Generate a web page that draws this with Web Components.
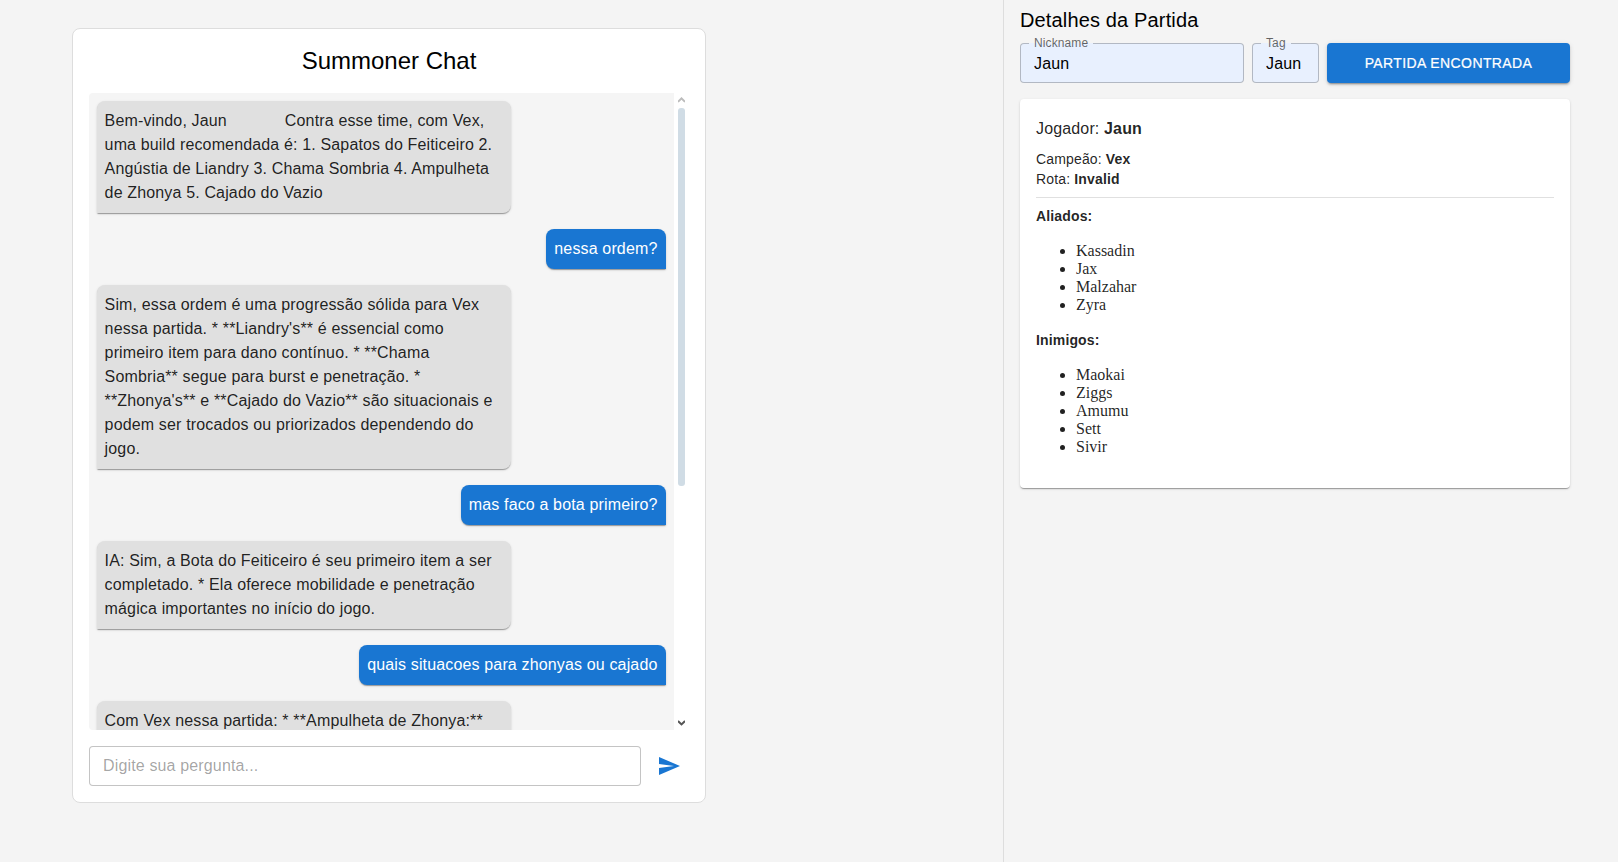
<!DOCTYPE html>
<html lang="pt-BR">
<head>
<meta charset="utf-8">
<title>Summoner Chat</title>
<style>
body { margin: 0; background: #f4f4f4; font-family: "Liberation Sans", Arial, sans-serif; color: rgba(0,0,0,.87); }
</style>
</head>
<body>
<summoner-app></summoner-app>
<script>
const define = (name, html, setup) => {
  const template = document.createElement('template');
  template.innerHTML = html;
  customElements.define(name, class extends HTMLElement {
    constructor() {
      super();
      this.attachShadow({ mode: 'open' }).append(template.content.cloneNode(true));
    }
    connectedCallback() { if (setup) setup(this, this.shadowRoot); }
  });
};

define('chat-message', `
<style>
:host { display: flex; justify-content: flex-start; margin-bottom: 16px; font-size: 16px; line-height: 24px; letter-spacing: .15008px; }
:host([mine]) { justify-content: flex-end; }
.bubble { box-sizing: content-box; max-width: 70%; padding: 8px 8.4px 8px 7.6px; border-radius: 8px 8px 8px 0; background: #e0e0e0; color: rgba(0,0,0,.87);
  box-shadow: 0 2px 1px -1px rgba(0,0,0,.2), 0 1px 1px rgba(0,0,0,.14), 0 1px 3px rgba(0,0,0,.12); }
:host([mine]) .bubble { padding: 8px 8.5px 8px 8px; border-radius: 8px 8px 0 8px; background: #1976d2; color: #fff; }
</style>
<div class="bubble"><slot></slot></div>`);

define('scroll-rail', `
<style>
:host { display: flex; flex-direction: column; align-items: center; width: 15px; box-sizing: border-box; padding: 4px 0 4px; background: #fff; }
svg { display: block; flex: none; width: 7px; height: 6px; }
.track { flex: 1; width: 7px; padding-top: 5px; }
.thumb { height: 378px; border-radius: 3px; background: #d0dce5; }
</style>
<svg viewBox="0 0 7 6"><path d="M0 4.9 3.5 1.4 7 4.9" fill="none" stroke="#bcbcbc" stroke-width="2"/></svg>
<div class="track"><div class="thumb"></div></div>
<svg viewBox="0 0 7 6"><path d="M0 1.1 3.5 4.4 7 1.1" fill="none" stroke="#555" stroke-width="2"/></svg>`);

define('chat-composer', `
<style>
:host { display: flex; gap: 8px; margin-top: 16px; }
input { flex: 1; min-width: 0; box-sizing: border-box; height: 40px; margin: 0; padding: 0 13px; border: 1px solid rgba(0,0,0,.23); border-radius: 4px;
  background: #fff; outline: 0; font: 16px "Liberation Sans", Arial, sans-serif; letter-spacing: .15008px; }
input::placeholder { color: rgba(0,0,0,.37); opacity: 1; }
button { width: 40px; height: 40px; padding: 8px; border: 0; background: none; color: #1976d2; }
svg { display: block; width: 24px; height: 24px; fill: currentColor; }
</style>
<input placeholder="Digite sua pergunta...">
<button aria-label="Enviar"><svg viewBox="0 0 24 24"><path d="M2.01 21 23 12 2.01 3 2 10l15 2-15 2z"/></svg></button>`);

define('chat-card', `
<style>
:host { display: block; box-sizing: border-box; width: 634px; height: 775px; padding: 16px; border: 1px solid #ddd; border-radius: 8px; background: #fff; }
h1 { margin: 0 0 16px; height: 32px; font-size: 24px; line-height: 32px; font-weight: 400; text-align: center; color: #000; }
.window { display: flex; height: 637px; border-radius: 4px; overflow: hidden; }
.messages { flex: 1; min-width: 0; box-sizing: border-box; padding: 8px; background: #f5f5f5; overflow: hidden; }
</style>
<h1>Summoner Chat</h1>
<div class="window">
  <div class="messages">
    <chat-message>Bem-vindo, Jaun&nbsp;&nbsp;&nbsp;&nbsp;&nbsp;&nbsp;&nbsp;&nbsp;&nbsp;&nbsp;&nbsp;&#x2006; Contra esse time, com Vex, uma build recomendada é: 1. Sapatos do Feiticeiro 2. Angústia de Liandry 3. Chama Sombria 4. Ampulheta de Zhonya 5. Cajado do Vazio</chat-message>
    <chat-message mine>nessa ordem?</chat-message>
    <chat-message>Sim, essa ordem é uma progressão sólida para Vex nessa partida. * **Liandry's** é essencial como primeiro item para dano contínuo. * **Chama Sombria** segue para burst e penetração. * **Zhonya's** e **Cajado do Vazio** são situacionais e podem ser trocados ou priorizados dependendo do jogo.</chat-message>
    <chat-message mine>mas faco a bota primeiro?</chat-message>
    <chat-message>IA: Sim, a Bota do Feiticeiro é seu primeiro item a ser completado. * Ela oferece mobilidade e penetração mágica importantes no início do jogo.</chat-message>
    <chat-message mine>quais situacoes para zhonyas ou cajado</chat-message>
    <chat-message><div style="width:398.3px">Com Vex nessa partida: * **Ampulheta de Zhonya:**</div></chat-message>
  </div>
  <scroll-rail></scroll-rail>
</div>
<chat-composer></chat-composer>`);

define('outlined-field', `
<style>
:host { display: block; min-width: 0; }
fieldset { box-sizing: border-box; height: 46px; margin: -6px 0 0; padding: 0 8px; border: 1px solid rgba(0,0,0,.23); border-radius: 4px; min-width: 0;
  background: #e8f0fe; }
legend { height: 13px; padding: 0 5px; font-size: 12px; line-height: 12px; letter-spacing: .1126px; color: rgba(0,0,0,.6); white-space: nowrap; }
input { display: block; box-sizing: border-box; width: 100%; height: 24px; margin: 2px 0 0; padding: 0 5px; border: 0; background: none; outline: 0;
  font: 16px "Liberation Sans", Arial, sans-serif; letter-spacing: .15008px; color: #000; }
</style>
<fieldset><legend></legend><input></fieldset>`, (host, root) => {
  root.querySelector('legend').textContent = host.getAttribute('label');
  root.querySelector('input').value = host.getAttribute('value');
});

define('team-list', `
<style>
:host { display: block; }
h3 { margin: 0; font-size: 14px; line-height: 20.02px; font-weight: 700; letter-spacing: .15px; }
ul { margin: 16px 0; padding-left: 40px; font: 16px/18px "Liberation Serif", "Times New Roman", serif; }
</style>
<h3></h3><ul></ul>`, (host, root) => {
  root.querySelector('h3').textContent = host.getAttribute('heading');
  root.querySelector('ul').replaceChildren(...host.getAttribute('names').split(',').map(name => {
    const li = document.createElement('li');
    li.textContent = name;
    return li;
  }));
});

define('match-card', `
<style>
:host { display: block; box-sizing: border-box; height: 389px; padding: 16px; border-radius: 4px; background: #fff;
  box-shadow: 0 2px 1px -1px rgba(0,0,0,.2), 0 1px 1px rgba(0,0,0,.14), 0 1px 3px rgba(0,0,0,.12); }
p { margin: 0; font-size: 14px; line-height: 20.02px; letter-spacing: .15px; }
.player { margin-bottom: 5.6px; font-size: 16px; line-height: 28px; }
hr { height: 1px; margin: 8px 0; border: 0; background: rgba(0,0,0,.12); }
</style>
<p class="player">Jogador: <b>Jaun</b></p>
<p>Campeão: <b>Vex</b></p>
<p>Rota: <b>Invalid</b></p>
<hr>
<team-list heading="Aliados:" names="Kassadin,Jax,Malzahar,Zyra"></team-list>
<team-list heading="Inimigos:" names="Maokai,Ziggs,Amumu,Sett,Sivir"></team-list>`);

define('match-panel', `
<style>
:host { display: block; box-sizing: border-box; padding: 4px 48px 0 16px; border-left: 1px solid #ddd; }
h2 { margin: 0 0 7px; font-size: 20px; line-height: 32px; font-weight: 400; letter-spacing: .15px; color: #000; }
form { display: grid; grid-template-columns: 224px 67px 243px; gap: 8px; margin-bottom: 16px; height: 40px; }
button { height: 40px; padding: 0; border: 0; border-radius: 4px; background: #1976d2; color: #fff; font: 500 14px/24px "Liberation Sans", Arial, sans-serif; letter-spacing: .4px; -webkit-text-stroke: .2px #fff;
  box-shadow: 0 3px 1px -2px rgba(0,0,0,.2), 0 2px 2px rgba(0,0,0,.14), 0 1px 5px rgba(0,0,0,.12); }
</style>
<h2>Detalhes da Partida</h2>
<form>
  <outlined-field label="Nickname" value="Jaun"></outlined-field>
  <outlined-field label="Tag" value="Jaun"></outlined-field>
  <button type="button">PARTIDA ENCONTRADA</button>
</form>
<match-card></match-card>`);

define('summoner-app', `
<style>
:host { display: grid; grid-template-columns: 1003px 1fr; height: 862px; overflow: hidden; }
main { padding: 28px 0 0 72px; }
</style>
<main><chat-card></chat-card></main>
<match-panel></match-panel>`);
</script>
</body>
</html>
